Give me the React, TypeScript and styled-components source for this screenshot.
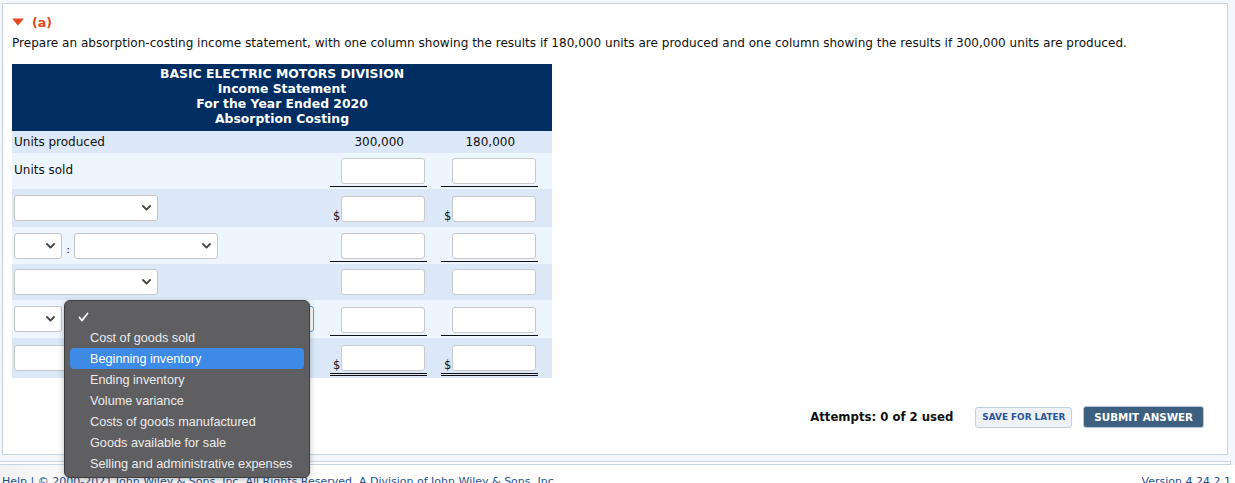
import React from "react";
import styled, { createGlobalStyle } from "styled-components";

const Global = createGlobalStyle`
  html, body { margin: 0; padding: 0; background: #f3f6fa; }
  body { font-family: "DejaVu Sans", Verdana, sans-serif; font-size: 12px; color: #111; overflow: hidden; }
`;

const Page = styled.div`
  width: 1235px;
  height: 483px;
  padding: 3px 0 0 2px;
  box-sizing: border-box;
  position: relative;
  overflow: hidden;
`;

const Panel = styled.div`
  width: 1226px;
  height: 452px;
  box-sizing: border-box;
  background: #fff;
  border: 1px solid #c9d4e1;
  padding: 11px 9px 0 9px;
  display: flex;
  flex-direction: column;
`;

const PartTitle = styled.div`
  display: flex;
  align-items: center;
  gap: 8px;
  color: #e5481c;
  font-weight: bold;
  font-size: 12.5px;
  height: 14px;
`;

const Instruction = styled.p`
  margin: 7px 0 0 0;
  font-size: 12.05px;
  line-height: 14px;
  white-space: nowrap;
`;

const Sheet = styled.table`
  margin-top: 14px;
  width: 540px;
  border-collapse: collapse;
  table-layout: fixed;
`;

const HeadCell = styled.th`
  background: #002d62;
  color: #fff;
  font-weight: bold;
  font-size: 12.4px;
  line-height: 15px;
  padding: 2px 0 5px 0;
  text-align: center;
  height: 62px;
  box-sizing: border-box;
  white-space: nowrap;
`;

const Row = styled.tr<{ $shade: boolean }>`
  background: ${(p) => (p.$shade ? "#dce8f7" : "#edf5fe")};
`;

const LabelCell = styled.td<{ $h: number; $top?: boolean }>`
  height: ${(p) => p.$h}px;
  box-sizing: border-box;
  padding: ${(p) => (p.$top ? "10px 0 0 2px" : "0 0 0 2px")};
  vertical-align: ${(p) => (p.$top ? "top" : "middle")};
  white-space: nowrap;
`;

const NumCell = styled.td`
  text-align: right;
  padding: 0 37px 0 0;
`;

const ValueCell = styled.td`
  padding: 0 14px 0 0;
  vertical-align: bottom;
`;

const ValueBox = styled.div<{ $rule: "single" | "double" | "none" }>`
  display: flex;
  align-items: flex-end;
  padding: 0 2px 2px 3px;
  margin-bottom: 2px;
  border-bottom: ${(p) =>
    p.$rule === "single" ? "1px solid #111" : p.$rule === "double" ? "3px double #111" : "1px solid transparent"};
`;

const Dollar = styled.span`
  width: 8px;
  font-size: 11.5px;
  line-height: 12px;
  padding-bottom: 0;
`;

const NumInput = styled.div`
  width: 84px;
  height: 26px;
  box-sizing: border-box;
  background: #fff;
  border: 1px solid #c9c9c9;
  border-radius: 3px;
`;

const SelectBox = styled.div<{ $w: number; $focus?: boolean }>`
  width: ${(p) => p.$w}px;
  height: 26px;
  box-sizing: border-box;
  background: #fff;
  border: 1px solid ${(p) => (p.$focus ? "#5b9be0" : "#c6c6c6")};
  border-radius: 3px;
  display: flex;
  align-items: center;
  justify-content: flex-end;
  padding-right: 6px;
`;

const TextInput = styled.div`
  width: 150px;
  height: 26px;
  box-sizing: border-box;
  background: #fff;
  border: 1px solid #c6c6c6;
  border-radius: 3px;
`;

const SelectPair = styled.div`
  display: flex;
  align-items: center;
`;

const Colon = styled.span`
  width: 12px;
  text-align: center;
  padding-top: 8px;
  font-size: 11px;
`;

const Spacer = styled.div`
  flex: 1;
`;

const ActionBar = styled.div`
  display: flex;
  align-items: center;
  justify-content: flex-end;
  padding-right: 14px;
  margin-bottom: 26px;
`;

const Attempts = styled.span`
  font-weight: bold;
  font-size: 11.7px;
  margin-right: 22px;
`;

const SaveButton = styled.div`
  height: 21px;
  box-sizing: border-box;
  padding: 0 6px;
  display: flex;
  align-items: center;
  background: #eef2f7;
  border: 1px solid #c3cfdc;
  border-radius: 3px;
  color: #2a5599;
  font-weight: bold;
  font-size: 8.9px;
  margin-right: 11px;
`;

const SubmitButton = styled.div`
  height: 22px;
  box-sizing: border-box;
  padding: 0 10px;
  display: flex;
  align-items: center;
  background: #3d5f80;
  border: 1px solid #b9c8d8;
  border-radius: 3px;
  color: #fff;
  font-weight: bold;
  font-size: 10.3px;
`;

const FooterStrip = styled.div`
  margin-top: 6px;
  margin-left: -2px;
  width: 1231px;
  height: 4px;
  box-sizing: border-box;
  border: 1px solid #c9d4e1;
  border-left: none;
  background: #fff;
`;

const Footer = styled.div`
  margin-left: -2px;
  width: 1235px;
  height: 20px;
  box-sizing: border-box;
  background: linear-gradient(90deg, #f1f1f1 0%, #ffffff 8%, #ffffff 100%);
  display: flex;
  justify-content: space-between;
  padding: 10px 4px 0 2px;
  color: #1f4f8c;
  font-size: 11px;
  line-height: 13px;
  white-space: nowrap;
`;

const Menu = styled.div`
  position: absolute;
  left: 64px;
  top: 300px;
  width: 246px;
  height: 178px;
  box-sizing: border-box;
  background: #5f5e60;
  border: 1px solid #3e3e40;
  border-radius: 6px;
  padding: 5px 5px;
  font-family: "Liberation Sans", Arial, sans-serif;
  font-size: 12.7px;
  color: #ececec;
  box-shadow: 0 2px 6px rgba(0, 0, 0, 0.25);
`;

const MenuItem = styled.div<{ $active?: boolean }>`
  height: 21px;
  display: flex;
  align-items: center;
  padding-left: 20px;
  border-radius: 4px;
  background: ${(p) => (p.$active ? "#3d8be6" : "transparent")};
  color: ${(p) => (p.$active ? "#fff" : "#ececec")};
`;

const Check = styled.div`
  height: 21px;
  display: flex;
  align-items: center;
  padding-left: 8px;
`;

const Chevron = () => (
  <svg width="9" height="6" viewBox="0 0 9 6">
    <polyline points="1,1 4.5,4.6 8,1" fill="none" stroke="#444" strokeWidth="1.8" strokeLinecap="round" strokeLinejoin="round" />
  </svg>
);

const Triangle = () => (
  <svg width="12" height="8" viewBox="0 0 12 8">
    <polygon points="0,0.5 12,0.5 6,7.5" fill="#e5481c" />
  </svg>
);

const CheckMark = () => (
  <svg width="11" height="10" viewBox="0 0 11 10">
    <polyline points="1.5,5.5 4,8.5 9.5,1.5" fill="none" stroke="#fff" strokeWidth="1.8" strokeLinecap="round" strokeLinejoin="round" />
  </svg>
);

type Rule = "single" | "double" | "none";

const Values = ({ dollar, rule }: { dollar?: boolean; rule: Rule }) => (
  <>
    {[0, 1].map((i) => (
      <ValueCell key={i}>
        <ValueBox $rule={rule}>
          <Dollar>{dollar ? "$" : ""}</Dollar>
          <NumInput />
        </ValueBox>
      </ValueCell>
    ))}
  </>
);

const items = [
  "Cost of goods sold",
  "Beginning inventory",
  "Ending inventory",
  "Volume variance",
  "Costs of goods manufactured",
  "Goods available for sale",
  "Selling and administrative expenses",
];

export default function App() {
  return (
    <Page>
      <Global />
      <Panel>
        <PartTitle>
          <Triangle />
          <span>(a)</span>
        </PartTitle>
        <Instruction>
          Prepare an absorption-costing income statement, with one column showing the results if 180,000 units are
          produced and one column showing the results if 300,000 units are produced.
        </Instruction>
        <Sheet>
          <colgroup>
            <col style={{ width: 318 }} />
            <col style={{ width: 111 }} />
            <col style={{ width: 111 }} />
          </colgroup>
          <thead>
            <tr>
              <HeadCell colSpan={3}>
                BASIC ELECTRIC MOTORS DIVISION
                <br />
                Income Statement
                <br />
                For the Year Ended 2020
                <br />
                Absorption Costing
              </HeadCell>
            </tr>
          </thead>
          <tbody>
            <Row $shade>
              <LabelCell $h={22}>Units produced</LabelCell>
              <NumCell>300,000</NumCell>
              <NumCell>180,000</NumCell>
            </Row>
            <Row $shade={false}>
              <LabelCell $h={36} $top>
                Units sold
              </LabelCell>
              <Values rule="single" />
            </Row>
            <Row $shade>
              <LabelCell $h={38}>
                <SelectBox $w={144}>
                  <Chevron />
                </SelectBox>
              </LabelCell>
              <Values dollar rule="none" />
            </Row>
            <Row $shade={false}>
              <LabelCell $h={37}>
                <SelectPair>
                  <SelectBox $w={48}>
                    <Chevron />
                  </SelectBox>
                  <Colon>:</Colon>
                  <SelectBox $w={144}>
                    <Chevron />
                  </SelectBox>
                </SelectPair>
              </LabelCell>
              <Values rule="single" />
            </Row>
            <Row $shade>
              <LabelCell $h={36}>
                <SelectBox $w={144}>
                  <Chevron />
                </SelectBox>
              </LabelCell>
              <Values rule="none" />
            </Row>
            <Row $shade={false}>
              <LabelCell $h={38}>
                <SelectPair>
                  <SelectBox $w={48}>
                    <Chevron />
                  </SelectBox>
                  <Colon />
                  <SelectBox $w={240} $focus>
                    <Chevron />
                  </SelectBox>
                </SelectPair>
              </LabelCell>
              <Values rule="single" />
            </Row>
            <Row $shade>
              <LabelCell $h={40}>
                <TextInput />
              </LabelCell>
              <Values dollar rule="double" />
            </Row>
          </tbody>
        </Sheet>
        <Spacer />
        <ActionBar>
          <Attempts>Attempts: 0 of 2 used</Attempts>
          <SaveButton>SAVE FOR LATER</SaveButton>
          <SubmitButton>SUBMIT ANSWER</SubmitButton>
        </ActionBar>
      </Panel>
      <FooterStrip />
      <Footer>
        <span>Help | © 2000-2021 John Wiley & Sons, Inc. All Rights Reserved. A Division of John Wiley & Sons, Inc.</span>
        <span>Version 4.24.2.1</span>
      </Footer>
      <Menu>
        <Check>
          <CheckMark />
        </Check>
        {items.map((t, i) => (
          <MenuItem key={t} $active={i === 1}>
            {t}
          </MenuItem>
        ))}
      </Menu>
    </Page>
  );
}
